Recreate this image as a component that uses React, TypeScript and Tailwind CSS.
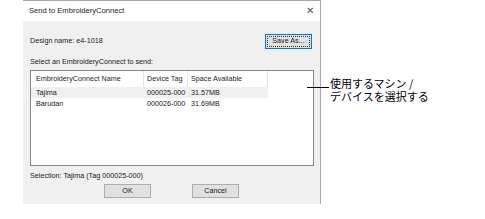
import React from 'react';

const rows = [
  { name: 'Tajima', tag: '000025-000', space: '31.57MB', selected: true },
  { name: 'Barudan', tag: '000026-000', space: '31.69MB', selected: false },
];

export default function App() {
  return (
    <div
      className="relative w-[485px] h-[219px] bg-white text-[#1a1a1a] overflow-hidden"
      style={{ fontFamily: '"Liberation Sans", Arial, sans-serif' }}
    >
      <div className="ml-[23px] w-[298px] h-[204px] flex flex-col border-r border-t border-[#a8a8a8] bg-[#f0f0f0]">
        {/* Title bar */}
        <div className="h-[20px] bg-white flex items-center justify-between pl-[6px] pr-[6px]">
          <span className="text-[7.6px]">Send to EmbroideryConnect</span>
          <span className="text-[10px] text-[#555] leading-none">✕</span>
        </div>

        <div className="flex-1 flex flex-col px-[7px] text-[7.2px] whitespace-nowrap">
          <div className="flex items-center justify-between mt-[13px] pr-[1px]">
            <span>Design name: e4-1018</span>
            <button className="w-[47px] h-[15px] border border-[#0078d7] bg-[#e1e1e1] flex items-center justify-center outline outline-1 outline-dotted outline-[#333] -outline-offset-[3px]">
              Save As...
            </button>
          </div>

          <div className="mt-[7px] leading-[11px]">Select an EmbroideryConnect to send:</div>

          <div className="mt-[3px] mr-[-1px] h-[96px] border border-[#828790] bg-white flex flex-col">
            <div className="flex h-[16px] text-[#262626]">
              <div className="w-[113px] pl-[5px] flex items-center border-r border-[#e5e5e5]">EmbroideryConnect Name</div>
              <div className="w-[44px] pl-[3px] flex items-center border-r border-[#e5e5e5]">Device Tag</div>
              <div className="w-[80px] pl-[3px] flex items-center border-r border-[#e5e5e5]">Space Available</div>
            </div>
            {rows.map((r) => (
              <div
                key={r.name}
                className={`flex h-[11px] w-[237px] leading-[11px] ${r.selected ? 'bg-[#f0f0f0]' : ''}`}
              >
                <div className="w-[113px] pl-[5px]">{r.name}</div>
                <div className="w-[44px] pl-[3px]">{r.tag}</div>
                <div className="w-[80px] pl-[3px]">{r.space}</div>
              </div>
            ))}
          </div>

          <div className="mt-[4px] leading-[11px]">Selection: Tajima (Tag 000025-000)</div>

          <div className="flex gap-[41px] ml-[74px] mt-[3px]">
            <button className="w-[47px] h-[14px] border border-[#adadad] bg-[#e1e1e1] flex items-center justify-center">OK</button>
            <button className="w-[47px] h-[14px] border border-[#adadad] bg-[#e1e1e1] flex items-center justify-center">Cancel</button>
          </div>
        </div>
      </div>

      {/* Callout */}
      <div className="absolute left-[307px] top-[77px] flex items-start">
        <div className="mt-[10px] w-[22px] h-px bg-black" />
        <div
          className="text-[11px] leading-[13px] text-black pl-[1px]"
          style={{ fontFamily: '"Noto Sans CJK JP", sans-serif' }}
        >
          <div>使用するマシン /</div>
          <div>デバイスを選択する</div>
        </div>
      </div>
    </div>
  );
}
